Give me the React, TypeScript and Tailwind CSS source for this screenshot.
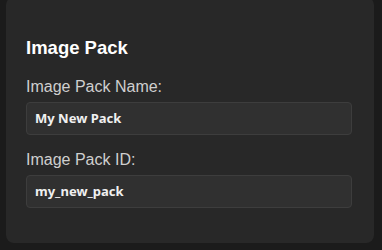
export default function App() {
  return (
    <div className="h-[250px] overflow-hidden bg-[#1b1b1b] px-[6px] pr-[8px]">
      <div className="-mt-[3px] h-[246px] rounded-[8px] bg-[#282828] pl-[20px] pr-[22px] pt-[40px] font-['Liberation_Sans',Arial,sans-serif]">
        <h2 className="text-[18.5px] font-bold leading-[22px] text-white">Image Pack</h2>

        <div className="mt-[18px]">
          <label className="block text-[16px] leading-[20px] text-[#cfcfcf]">Image Pack Name:</label>
          <div className="mt-[5px] flex h-[33px] items-center rounded-[4px] border border-[#3d3d3d] bg-[#303030] px-[8px] font-['Noto_Sans',sans-serif] text-[13px] font-bold text-[#f0f0f0]">
            My New Pack
          </div>
        </div>

        <div className="mt-[15px]">
          <label className="block text-[16px] leading-[20px] text-[#cfcfcf]">Image Pack ID:</label>
          <div className="mt-[5px] flex h-[33px] items-center rounded-[4px] border border-[#3d3d3d] bg-[#303030] px-[8px] font-['Noto_Sans',sans-serif] text-[13px] font-bold text-[#f0f0f0]">
            my_new_pack
          </div>
        </div>
      </div>
    </div>
  )
}
